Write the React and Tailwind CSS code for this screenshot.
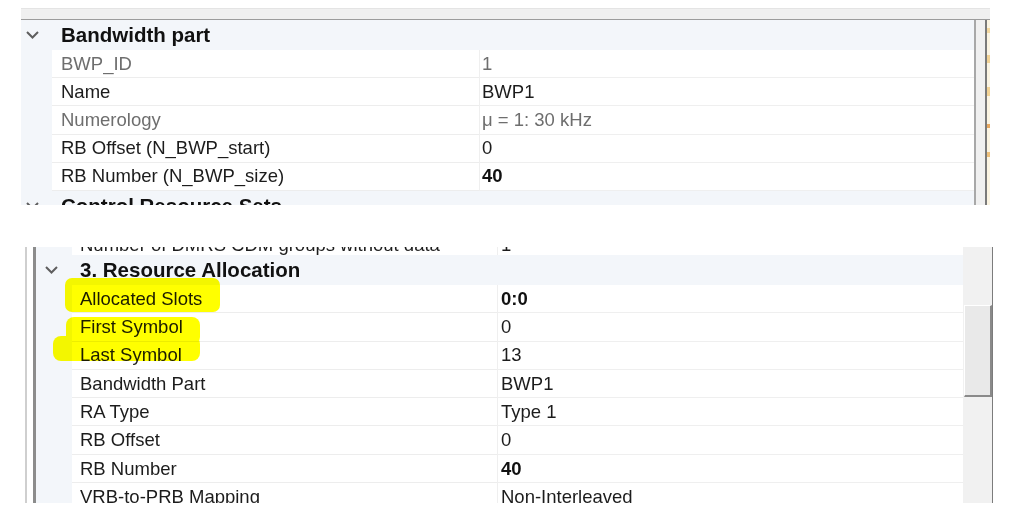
import React from 'react';

const font = { fontFamily: '"Liberation Sans", Arial, sans-serif' };

const Chevron = () => (
  <svg width="13" height="8" viewBox="0 0 13 8" className="shrink-0">
    <polyline points="1,1 6.5,6.5 12,1" fill="none" stroke="#5e5e5e" strokeWidth="2" />
  </svg>
);

const bwpRows = [
  { label: 'BWP_ID', value: '1', dim: true },
  { label: 'Name', value: 'BWP1' },
  { label: 'Numerology', value: 'μ = 1: 30 kHz', dim: true },
  { label: 'RB Offset (N_BWP_start)', value: '0' },
  { label: 'RB Number (N_BWP_size)', value: '40', bold: true },
];

const raRows = [
  { label: 'Allocated Slots', value: '0:0', bold: true },
  { label: 'First Symbol', value: '0' },
  { label: 'Last Symbol', value: '13' },
  { label: 'Bandwidth Part', value: 'BWP1' },
  { label: 'RA Type', value: 'Type 1' },
  { label: 'RB Offset', value: '0' },
  { label: 'RB Number', value: '40', bold: true },
  { label: 'VRB-to-PRB Mapping', value: 'Non-Interleaved' },
];

const textCls = (row) =>
  row.dim ? 'text-[#6e6e6e]' : row.bold ? 'text-[#111] font-bold' : 'text-[#1c1c1c]';

const TopRow = ({ row }) => (
  <div className="flex h-[28.2px] shrink-0 text-[18.5px]">
    <div className="w-[31px] bg-[#f3f6fa]" />
    <div className={`w-[427px] flex items-center pl-[9px] border-b border-[#ededed] ${row.dim ? 'text-[#6e6e6e]' : 'text-[#1c1c1c]'}`}>
      {row.label}
    </div>
    <div className={`flex-1 flex items-center pl-[2px] border-b border-l border-[#efefef] ${textCls(row)}`}>
      {row.value}
    </div>
  </div>
);

const LowRow = ({ row, className = '' }) => (
  <div className={`flex h-[28.3px] shrink-0 text-[18.5px] ${className}`}>
    <div className="w-[36px] bg-[#f3f6fa]" />
    <div className="w-[425px] flex items-center pl-[8px] border-b border-[#ededed] text-[#1c1c1c]">
      {row.label}
    </div>
    <div className={`flex-1 flex items-center pl-[3px] border-b border-l border-[#efefef] ${textCls(row)}`}>
      {row.value}
    </div>
  </div>
);

export default function App() {
  return (
    <div className="relative w-[1013px] h-[517px] bg-white overflow-hidden" style={font}>
      {/* upper grid: Bandwidth part */}
      <div className="pt-[8px] pl-[21px]">
        <div className="w-[969px] h-[12px] bg-[#f0f0f0] border-t border-[#e4e4e4] border-b border-b-[#9c9c9c]" />
        <div className="flex h-[185px]">
          <div className="w-[955px] flex flex-col overflow-hidden border-r-2 border-[#a8a8a8]">
            <div className="flex items-center h-[30px] shrink-0 bg-[#f3f6fa]">
              <div className="ml-[5px]"><Chevron /></div>
              <span className="ml-[22px] text-[20.5px] font-bold text-[#111]">Bandwidth part</span>
            </div>
            {bwpRows.map((r) => (
              <TopRow key={r.label} row={r} />
            ))}
            <div className="flex items-center h-[30px] shrink-0 bg-[#f3f6fa]">
              <div className="ml-[5px]"><Chevron /></div>
              <span className="ml-[22px] text-[20.5px] font-bold text-[#111]">Control Resource Sets</span>
            </div>
          </div>
          <div className="w-[9px] bg-[#f0f0f0]" />
          <div className="w-[5px] flex flex-col border-l-2 border-[#7a7a7a] bg-[#fbf4e2]">
            <div className="mt-[8px] h-[5px] bg-[#f5d9a0]" />
            <div className="mt-[22px] h-[8px] bg-[#f3d395]" />
            <div className="mt-[24px] h-[9px] bg-[#f3d395]" />
            <div className="mt-[28px] h-[4px] bg-[#e8a860]" />
            <div className="mt-[24px] h-[5px] bg-[#efc07a]" />
          </div>
        </div>
      </div>

      {/* lower grid: 3. Resource Allocation */}
      <div className="mt-[42px] ml-[25px] flex w-[969px] h-[256px] border-l-2 border-[#cfcfcf] pl-[6px]">
        <div className="flex flex-1 border-l-[3px] border-[#8c8c8c]">
          <div className="w-[927px] flex flex-col overflow-hidden">
            <div className="flex h-[28px] shrink-0 -mt-[20px] text-[18.5px]">
              <div className="w-[36px] bg-[#f3f6fa]" />
              <div className="w-[425px] flex items-center pt-[8px] pl-[8px] text-[#1c1c1c] whitespace-nowrap">
                Number of DMRS CDM groups without data
              </div>
              <div className="flex-1 flex items-center pt-[8px] pl-[3px] border-l border-[#efefef] text-[#1c1c1c]">1</div>
            </div>
            <div className="flex items-center h-[30px] shrink-0 bg-[#f3f6fa]">
              <div className="ml-[9px]"><Chevron /></div>
              <span className="ml-[22px] text-[20.5px] font-bold text-[#111]">3. Resource Allocation</span>
            </div>
            {raRows.map((r) => (
              <LowRow key={r.label} row={r} />
            ))}
          </div>
          <div className="relative w-[30px] bg-[#f1f1f1] border-r border-[#7c7c7c]">
            <div className="absolute left-[1px] top-[58px] w-[28px] h-[92px] bg-[#e9e9e9] border-t border-l border-white border-r-2 border-b-2 border-r-[#8a8a8a] border-b-[#8a8a8a]" />
          </div>
        </div>
      </div>

      {/* highlighter marks */}
      <div className="pointer-events-none absolute left-[65px] top-[278px] w-[155px] h-[34px] rounded-[7px] bg-[#ffff00] mix-blend-multiply" />
      <div className="pointer-events-none absolute left-[66px] top-[317px] w-[134px] h-[28px] rounded-[8px] bg-[#ffff00] mix-blend-multiply" />
      <div className="pointer-events-none absolute left-[53px] top-[336px] w-[147px] h-[25px] rounded-[8px] bg-[#ffff00] mix-blend-multiply" />
    </div>
  );
}
